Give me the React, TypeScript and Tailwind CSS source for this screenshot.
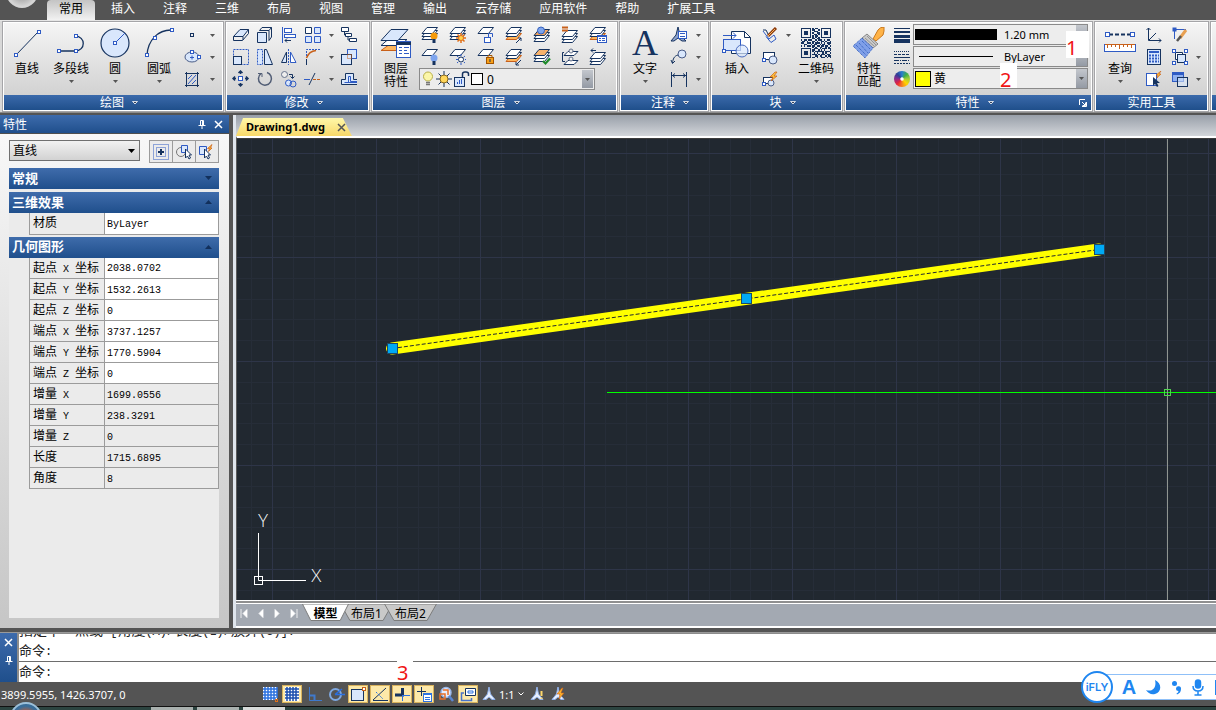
import { useState, type ReactNode } from 'react'
import clsx from 'clsx'

const NAVY = '#16335f'
const BLUE = '#2f5bc4'
const PALE = '#d9e7fc'
const ORANGE = '#c8601a'

const menus = ['常用', '插入', '注释', '三维', '布局', '视图', '管理', '输出', '云存储', '应用软件', '帮助', '扩展工具']

type Prop = { label: string; axis?: string; tail?: string; value: string; readOnly?: boolean }

const geometry: Prop[] = [
  { label: '起点', axis: 'X', tail: '坐标', value: '2038.0702' },
  { label: '起点', axis: 'Y', tail: '坐标', value: '1532.2613' },
  { label: '起点', axis: 'Z', tail: '坐标', value: '0' },
  { label: '端点', axis: 'X', tail: '坐标', value: '3737.1257' },
  { label: '端点', axis: 'Y', tail: '坐标', value: '1770.5904' },
  { label: '端点', axis: 'Z', tail: '坐标', value: '0' },
  { label: '增量', axis: 'X', value: '1699.0556', readOnly: true },
  { label: '增量', axis: 'Y', value: '238.3291', readOnly: true },
  { label: '增量', axis: 'Z', value: '0', readOnly: true },
  { label: '长度', value: '1715.6895', readOnly: true },
  { label: '角度', value: '8', readOnly: true },
]

function Svg({ w = 18, h = w, children }: { w?: number; h?: number; children: ReactNode }) {
  return (
    <svg width={w} height={h} viewBox={`0 0 ${w} ${h}`} fill="none" stroke={NAVY} className="block shrink-0" aria-hidden="true">
      {children}
    </svg>
  )
}

// small square grip used all over the drawing icons
function Grip({ x, y }: { x: number; y: number }) {
  return <rect x={x - 1.5} y={y - 1.5} width="3" height="3" fill="#fff" stroke={BLUE} />
}

function Tri({ className }: { className?: string }) {
  return (
    <svg width="5" height="3" viewBox="0 0 5 3" className={clsx('block', className)} aria-hidden="true">
      <path d="M0 0H5L2.5 3Z" fill="#555" />
    </svg>
  )
}

function Chevron() {
  return (
    <svg width="6" height="4" viewBox="0 0 6 4" aria-hidden="true">
      <path d="M0.5 0.5H5.5L3 3Z" fill="#33415c" stroke="#fff" strokeWidth="0.8" />
    </svg>
  )
}

function Panel({ title, label, launcher, noArrow, className, children }: {
  title: string
  label?: string
  launcher?: boolean
  noArrow?: boolean
  className: string
  children?: ReactNode
}) {
  const arrow = title && !noArrow
  return (
    <section
      aria-label={label ?? title}
      className={clsx('flex shrink-0 flex-col border border-[#a5a5a8] bg-white p-px', className)}
    >
      <div className="flex h-[72px] bg-linear-to-b from-[#f5f5f5] to-[#d2d2d2]">{children}</div>
      <button
        className={clsx(
          'relative flex h-[15px] w-full items-center justify-center gap-2 bg-linear-to-b from-[#3b6aab] to-[#1f4f8b] text-white',
          arrow && 'pl-3',
        )}
      >
        {title}
        {arrow && <Chevron />}
        {launcher && (
          <svg width="8" height="8" viewBox="0 0 8 8" className="absolute right-1" aria-hidden="true">
            <path d="M0.5 6V0.5H6M7.5 3V7.5H3M3 3L6 6M6.5 3.5V6.5H3.5" stroke="#fff" fill="none" />
          </svg>
        )}
      </button>
    </section>
  )
}

function Big({ icon, lines, arrow, className }: { icon: ReactNode; lines: string[]; arrow?: boolean; className: string }) {
  return (
    <button className={clsx('flex shrink-0 flex-col items-center pt-1', className)}>
      {icon}
      <span className="mt-[3px] leading-[13px] whitespace-nowrap">
        {lines.map((l) => (
          <span key={l} className="block">{l}</span>
        ))}
      </span>
      {arrow && <Tri className="mt-[5px]" />}
    </button>
  )
}

function Col({ items, className }: { items: ReactNode[]; className: string }) {
  return (
    <div className={clsx('flex shrink-0 flex-col pt-px', className)}>
      {items.map((it, i) => (
        <div key={i} className="flex h-[22px] items-center justify-center">
          {it && <button>{it}</button>}
        </div>
      ))}
    </div>
  )
}

// stack of layer sheets, drawn from the lowest up
function Sheets({ y = 1, n = 3, top = '#fff', bottom = '#fff' }: { y?: number; n?: number; top?: string; bottom?: string }) {
  return (
    <>
      {Array.from({ length: n }, (_, i) => n - 1 - i).map((i) => (
        <path
          key={i}
          d={`M6 ${y + i * 3 + 0.5}H16.5L11.5 ${y + i * 3 + 6.5}H1Z`}
          fill={i === 0 ? top : i === n - 1 ? bottom : '#fff'}
          stroke={i === n - 1 && bottom !== '#fff' ? ORANGE : NAVY}
        />
      ))}
    </>
  )
}

const Bulb = ({ c }: { c: string }) => (
  <g stroke="none">
    <circle cx="13" cy="10" r="3.5" fill={c} />
    <rect x="11.5" y="13" width="3" height="4" fill={NAVY} />
  </g>
)

const layerTop = [
  <Svg><Sheets /><Bulb c="#f59a0b" /></Svg>,
  <Svg>
    <Sheets />
    <path d="M12 7V17M7 12H17M8.5 8.5L15.5 15.5M15.5 8.5L8.5 15.5" stroke="#e0701a" strokeWidth="1.5" />
    <circle cx="12" cy="12" r="2.5" fill="#ffd34d" stroke="#e0701a" />
  </Svg>,
  <Svg><Sheets n={1} /><rect x="7.5" y="11.5" width="6" height="5" fill="#fff" stroke={BLUE} /><path d="M11.5 11V7.5H15.5V11" stroke={BLUE} /></Svg>,
  <Svg><Sheets bottom="#ffb65c" /><path d="M11 17L16 12M13 12H16V15" /></Svg>,
  <Svg><Sheets y={3} top="#f3a45d" /><circle cx="8" cy="4.5" r="3.5" fill="#7ea5ee" stroke="#3460bd" /></Svg>,
  <Svg><Sheets y={4} /><path d="M1 1.5H7M1 4.5H7" stroke={ORANGE} strokeWidth="2" /></Svg>,
  <Svg><Sheets bottom="#ffb65c" /><rect x="8.5" y="9.5" width="9" height="7" fill="#fff" stroke={BLUE} /><path d="M8 10.5H18M10 12.5H12M13 12.5H16M10 14.5H12M13 14.5H16" stroke={BLUE} /></Svg>,
]

const layerBottom = [
  <Svg><Sheets n={1} /><Bulb c="#7ea5ee" /></Svg>,
  <Svg>
    <Sheets n={1} />
    <path d="M12 6V17M7 11.5H17M8 8L16 15M16 8L8 15" stroke={BLUE} strokeDasharray="2 1" />
    <circle cx="12" cy="11.5" r="2.5" fill="#fff" stroke={NAVY} />
  </Svg>,
  <Svg><Sheets n={1} /><path d="M11 10V7.5H15V10" stroke="#a35400" /><rect x="9.5" y="9.5" width="7" height="6" fill="#f6a01a" stroke="#a35400" /><path d="M13 11V14" /></Svg>,
  <Svg><Sheets bottom="#ffb65c" /><path d="M16 12L11 17M11 14V17H14" /></Svg>,
  <Svg><Sheets top="#f8b26b" /><path d="M10 13L12.5 15.5L17 10.5" stroke="#1f8a2a" strokeWidth="2.2" /></Svg>,
  <Svg>
    <path d="M7 3.5H17L13 7.5H3Z" fill="#fff" />
    <path d="M7 12.5H17L13 16.5H3Z" fill="#fff" />
    <circle cx="10" cy="3" r="2" fill="#eee" stroke="#66738d" />
    <circle cx="10" cy="11" r="2" fill="#eee" stroke="#66738d" />
    <path d="M3 4.5H1.5V13.5H4" />
  </Svg>,
  <Svg><Sheets y={4} /><path d="M2 2.5H7M4 0.5L2 2.5L4 4.5" /></Svg>,
]

// 修改 panel, column by column
const modify: ReactNode[][] = [
  [
    <Svg><path d="M1.5 10.5L8 3.5H16.5L11 10.5Z" fill={PALE} /><path d="M1.5 10.5V14.5H10.5L16.5 7.5V3.5M11 10.5V14" /></Svg>,
    <Svg><rect x="1.5" y="1.5" width="15" height="15" stroke={BLUE} strokeDasharray="2 1" /><rect x="1.5" y="8.5" width="8" height="8" fill={PALE} /></Svg>,
    <Svg>
      <rect x="6.5" y="6.5" width="4" height="4" fill="#fff" stroke={BLUE} />
      <path d="M8.5 4V1M6.5 3L8.5 1L10.5 3M8.5 13V16M6.5 14L8.5 16L10.5 14M4 8.5H1M3 6.5L1 8.5L3 10.5M13 8.5H16M14 6.5L16 8.5L14 10.5" strokeWidth="1.5" />
    </Svg>,
  ],
  [
    <Svg><path d="M1.5 6.5H10.5V16.5H1.5Z" fill={PALE} /><path d="M3.5 4.5L6 1.5H15.5L13 4.5M3.5 4.5H13V14.5L15.5 11V1.5" /></Svg>,
    <Svg><path d="M1.5 1.5H6.5V16.5H1.5Z" fill={PALE} stroke={BLUE} strokeDasharray="2 1" /><path d="M8.5 1.5H10.5L16.5 16.5H8.5Z" fill={PALE} /></Svg>,
    <Svg><path d="M5 3.5A6.5 6.5 0 1 0 11 2.5" stroke="#515d75" strokeWidth="1.5" /><path d="M2 3.5H6V7" stroke="#515d75" /></Svg>,
  ],
  [
    <Svg><path d="M2.5 1V17" stroke={BLUE} /><rect x="4.5" y="2.5" width="7" height="4" fill="#fff" stroke={BLUE} /><rect x="4.5" y="8.5" width="11" height="3" fill="#fff" stroke={BLUE} /><path d="M11 14.5H5M7 12.5L5 14.5L7 16.5" /></Svg>,
    <Svg><path d="M8.5 1V17" stroke={BLUE} strokeDasharray="2 1" /><path d="M6.5 4V14.5H1.5Z" fill={PALE} /><path d="M10.5 4V14.5H16Z" fill="#fff" stroke={BLUE} /></Svg>,
    <Svg><circle cx="4.5" cy="4.5" r="3" fill="#eee" stroke="#66738d" /><circle cx="8.5" cy="13" r="3" fill={PALE} stroke={BLUE} /><circle cx="13" cy="14" r="3" stroke={BLUE} /><path d="M9 4.5H12.5V8M10.5 6.5L12.5 8.5L14.5 6.5" /></Svg>,
  ],
  [
    <Svg><path d="M1.5 1.5H7.5V7.5H1.5Z" fill="#fff" /><path d="M10.5 1.5H16.5V7.5H10.5ZM1.5 10.5H7.5V16.5H1.5ZM10.5 10.5H16.5V16.5H10.5Z" fill={PALE} stroke={BLUE} /></Svg>,
    <Svg><path d="M2.5 17V11" /><path d="M2.5 10C4 6 7 3 12 2.5" stroke={ORANGE} strokeWidth="1.5" /><path d="M2.5 8V1.5H17" stroke={BLUE} strokeDasharray="2 1" /></Svg>,
    <Svg><path d="M0 9.5H6" stroke={BLUE} /><path d="M5 15L11 3" /><path d="M9 9.5H17" stroke={ORANGE} strokeDasharray="3 1" /></Svg>,
  ],
  [<Tri />, <Tri />, <Tri />],
  [
    <Svg><path d="M1.5 1.5H8.5V5.5H1.5ZM5.5 7.5H11.5V10.5H5.5ZM9.5 12.5H16.5V15.5H9.5Z" fill="#fff" /><path d="M4.5 5.5V9H6M8 11V14H10" /></Svg>,
    <Svg><rect x="7.5" y="1.5" width="9" height="9" fill={PALE} stroke={BLUE} /><rect x="1.5" y="6.5" width="10" height="10" fill={PALE} /><path d="M7.5 6.5H11.5V10.5H7.5Z" stroke={ORANGE} strokeDasharray="1 1" /></Svg>,
    <Svg><path d="M17 14.5H1.5V9.5H5.5V3.5H13.5V9.5H17" fill={PALE} /><path d="M17 12.5H4.5M8.5 12V6.5H10.5V11.5H17" stroke={BLUE} /></Svg>,
  ],
]

const QR = [
  '111111101011001111111', '100000101100101000001', '101110100111001011101', '101110101001101011101',
  '101110100110101011101', '100000101011001000001', '111111101010101111111', '000000001101100000000',
  '101101110010111010110', '011010001101001101001', '110011101011101010111', '001100010110010110010',
  '101011101101101101101', '000000001010011001010', '111111100111010111011', '100000101100101010001',
  '101110101011111101110', '101110100101000101001', '101110101110101110110', '100000100011011001011',
  '111111101101001110101',
]

function QrIcon() {
  return (
    <svg width="30" height="30" viewBox="0 0 21 21" fill={NAVY} className="block" shapeRendering="crispEdges" aria-hidden="true">
      {QR.map((row, y) =>
        row.split('').map((c, x) => (c === '1' ? <rect key={`${x}-${y}`} x={x} y={y} width="1" height="1" /> : null)),
      )}
    </svg>
  )
}

function DropArrow() {
  return (
    <span className="pointer-events-none flex w-[11px] shrink-0 items-center justify-center bg-linear-to-b from-[#c3c7cd] to-[#949aa4]">
      <Tri />
    </span>
  )
}

function Ribbon() {
  return (
    <div className="flex shrink-0 gap-px overflow-hidden border-t border-[#e6e6e6] bg-[#d8d8d8] pl-0.5">
      <Panel title="绘图" className="w-[222px]">
        <Big className="ml-px w-11" lines={['直线']} icon={<Svg w={30} h={32}><path d="M4 28L26 5" /><Grip x={4} y={28} /><Grip x={27} y={5} /></Svg>} />
        <Big className="w-11" arrow lines={['多段线']} icon={<Svg w={32}><path d="M3 24H20C31 24 31 9 20 9" strokeWidth="1.3" /><Grip x={4} y={24} /><Grip x={21} y={24} /><Grip x={21} y={9} /></Svg>} />
        <Big className="w-11" arrow lines={['圆']} icon={<Svg w={32}><circle cx="16" cy="16" r="14" fill={PALE} strokeWidth="1.2" /><path d="M16 16L26 6" stroke={BLUE} /><Grip x={16} y={16} /></Svg>} />
        <Big className="w-11" arrow lines={['圆弧']} icon={<Svg w={32}><path d="M4 28C5 13 15 3 28 3" strokeWidth="1.3" /><Grip x={4} y={28} /><Grip x={12} y={11} /><Grip x={29} y={3} /></Svg>} />
        <Col className="w-[22px]" items={[
          <Svg><rect x="7.5" y="7.5" width="3" height="3" /></Svg>,
          <Svg><ellipse cx="9" cy="9" rx="7" ry="5" fill={PALE} stroke="#4a5d88" /><path d="M7 9.5H11M9 7.5V11.5" stroke={BLUE} /><Grip x={9} y={4} /><Grip x={16} y={9} /></Svg>,
          <Svg><path d="M3.5 2V17M14.5 2V17M2 3.5H16M2 15.5H16" /><path d="M5 9L9 5M5 14L13 5M9 14L13 10" stroke={BLUE} /></Svg>,
        ]} />
        <Col className="w-[18px]" items={[<Tri />, <Tri />, <Tri />]} />
      </Panel>

      <Panel title="修改" className="w-[145px]">
        <div className="flex pl-0.5">
          {modify.map((items, i) => (
            <Col key={i} items={items} className={i === 4 ? 'w-3' : 'w-6'} />
          ))}
        </div>
      </Panel>

      <Panel title="图层" className="w-[247px]">
        <Big className="ml-[3px] w-10" lines={['图层', '特性']} icon={
          <Svg w={32}>
            <path d="M8 18.5H26L20 23.5H1Z" fill="#ffb65c" stroke={ORANGE} />
            <path d="M8 12.5H27L20 18.5H1Z" fill="#fff" />
            <path d="M11 2.5H28L18 13.5H1Z" fill={PALE} />
            <rect x="16.5" y="14.5" width="14" height="16" fill="#fff" stroke={BLUE} />
            <path d="M16 16.5H31" stroke={NAVY} strokeWidth="3" />
            <path d="M19 20.5H22M24 20.5H29M19 23.5H22M24 23.5H27M19 26.5H22M24 26.5H29" stroke={BLUE} />
          </Svg>
        } />
        <div className="pt-px">
          {[layerTop, layerBottom].map((row, r) => (
            <div key={r} className="flex">
              {row.map((icon, i) => (
                <button key={i} className="flex h-[22px] w-7 items-center justify-center">{icon}</button>
              ))}
            </div>
          ))}
          <div className="ml-[3px] flex h-[22px] w-[176px] border border-[#8a8a8a] bg-[#ececec] p-px">
            <div className="flex items-center gap-px">
              <Svg w={14} h={18}>
                <circle cx="7" cy="6.5" r="4.5" fill="#fbf6a8" stroke="#b9b04a" />
                <path d="M5 12.5H9M5 14.5H9" stroke="#777" strokeWidth="1.5" />
              </Svg>
              <Svg w={16} h={18}>
                <path d="M8 1V17M0 9H16M2.5 3.5L13.5 14.5M13.5 3.5L2.5 14.5" stroke={NAVY} />
                <circle cx="8" cy="9" r="4" fill="#ffd65a" stroke="#8a6a20" />
              </Svg>
              <Svg w={17} h={18}>
                <rect x="1.5" y="7.5" width="10" height="9" fill={PALE} stroke={NAVY} />
                <path d="M4.5 14V12M6.5 14V10M8.5 14V9" stroke={BLUE} />
                <path d="M9.5 7V4Q9.5 2 12 2H13Q15.5 2 15.5 4V6" strokeWidth="1.5" />
              </Svg>
              <span className="size-3 border border-black bg-white" />
            </div>
            <select aria-label="图层" className="min-w-0 flex-1 appearance-none pl-1 outline-none">
              <option>0</option>
            </select>
            <DropArrow />
          </div>
        </div>
      </Panel>

      <Panel title="注释" className="w-[90px]">
        <Big className="w-12" arrow lines={['文字']} icon={<span className="flex h-8 items-center font-['Liberation_Serif',serif] text-[36px] leading-8 text-[#16335f]">A</span>} />
        <Col className="w-5" items={[
          <Svg><path d="M8 1L10 9L16 15H12L8 12L4 15H1L6 9Z" fill="#8da2cc" /><rect x="8.5" y="5.5" width="8" height="7" fill="#fff" stroke={BLUE} /><path d="M10 7.5H15M10 10.5H15" stroke={BLUE} /></Svg>,
          <Svg><circle cx="12" cy="6" r="4" fill={PALE} stroke="#4a5d88" /><path d="M8 7C4 8 3 11 2.5 15M1 12L2.5 15.5L5 13" /></Svg>,
          <Svg><path d="M1.5 2V17M16.5 2V17" /><path d="M2 5.5H16M5 3.5L2.5 5.5L5 7.5M13 3.5L15.5 5.5L13 7.5" stroke={NAVY} /></Svg>,
        ]} />
        <Col className="w-[18px]" items={[<Tri />, <Tri />, <Tri />]} />
      </Panel>

      <Panel title="块" className="w-[133px]">
        <Big className="w-[50px]" lines={['插入']} icon={
          <Svg w={30} h={32}>
            <path d="M9.5 4.5H22.5L28.5 10.5V26.5H9.5Z" fill="#fff" />
            <path d="M22.5 4.5V10.5H28.5" />
            <rect x="1.5" y="12.5" width="17" height="11" fill={PALE} stroke={BLUE} />
            <circle cx="20" cy="24" r="6" fill={PALE} fillOpacity="0.7" stroke="#4a6cc0" />
            <path d="M1 8.5H14M11 5.5L14 8.5L11 11.5" stroke={BLUE} />
            <Grip x={2} y={24} />
          </Svg>
        } />
        <Col className="w-4" items={[
          <Svg w={16}><path d="M1 4L7 12L12 8M4 9.5L9 15.5L14 12L12 8" stroke={BLUE} /><path d="M1 3H4L6 7" /><path d="M6 9L14 1" stroke="#8c3a0c" strokeWidth="3" /><path d="M6 9L13 2" stroke="#f5b25a" /></Svg>,
          <Svg w={16}><rect x="1.5" y="3.5" width="11" height="7" fill="#fff" /><circle cx="11" cy="11" r="4" fill={PALE} stroke="#4a5d88" /><Grip x={2} y={11} /></Svg>,
          <Svg w={16}><rect x="1.5" y="6.5" width="9" height="6" fill="#fff" /><circle cx="9" cy="12" r="3" fill={PALE} stroke="#4a5d88" /><path d="M13 1L8 6H11L9 10L15 5H12L15 1Z" fill="#ffc13a" stroke={ORANGE} strokeWidth="0.7" /><Grip x={2} y={13} /></Svg>,
        ]} />
        <Col className="w-5" items={[<Tri />, null, null]} />
        <Big className="w-9" arrow lines={['二维码']} icon={<span className="flex h-8 items-center"><QrIcon /></span>} />
      </Panel>

      <Panel title="特性" launcher className="w-[249px]">
        <Big className="w-[46px]" lines={['特性', '匹配']} icon={
          <Svg w={32}>
            <path d="M20 12L25 3Q27 0 31 0V4L30 8L23 14Z" fill="#ffb347" stroke="#c9781d" />
            <path d="M14 7L25 17L20 21L9 11Z" fill="#c9c9c9" stroke="#888" />
            <path d="M12 11L21 19M14 9L23 18" stroke="#888" strokeWidth="0.8" />
            <path d="M9 11L20 21L12 31L0 19Z" fill="#7f9fe8" stroke="#2a57b8" strokeDasharray="1 1" />
            <path d="M6 16L15 26M3 18L13 28M9 14L17 22" stroke="#2a57b8" strokeDasharray="1 1" />
          </Svg>
        } />
        <Col className="w-5" items={[
          <Svg w={16}><path d="M0 1.5H16" /><path d="M0 5H16" strokeWidth="2" /><path d="M0 9.5H16" strokeWidth="3" /><path d="M0 14H16" strokeWidth="4" /></Svg>,
          <Svg w={16}><path d="M0 2.5H16" strokeDasharray="1 1" /><path d="M0 5.5H16" strokeDasharray="3 1" /><path d="M0 8.5H16" /><path d="M0 11.5H16" strokeDasharray="5 1 1 1" /><path d="M0 14.5H16" strokeDasharray="2 1" /></Svg>,
          <span className="block size-4 rounded-full bg-[radial-gradient(#ffffff_10%,transparent_20%),conic-gradient(#2b7fd0,#3fae49,#a8cf38,#ffd400,#f58220,#e5243b,#8f2a8c,#2b3f96,#2b7fd0)]" />,
        ]} />
        <div className="relative mt-px mr-[3px] ml-px flex min-w-0 flex-1 flex-col gap-px">
          {[
            { name: '线宽', value: '1.20 mm', mark: <span className="h-[11px] w-[82px] bg-black" /> },
            { name: '线型', value: 'ByLayer', mark: <span className="mx-1 h-px w-[74px] bg-black" /> },
            { name: '颜色', value: '黄', mark: <span className="size-4 border border-black bg-[#ffff00]" /> },
          ].map((f, i) => (
            <div key={f.name} className="flex h-[21px] border border-[#8a8a8a] bg-[#ededed]">
              <div className="flex items-center pl-px">{f.mark}</div>
              <select
                aria-label={f.name}
                className={clsx('min-w-0 flex-1 appearance-none outline-none', i === 2 ? 'pl-[3px]' : 'pl-[7px] text-[11px]')}
              >
                <option>{f.value}</option>
              </select>
              <DropArrow />
            </div>
          ))}
          <span className="absolute top-[7px] -right-px flex h-[27px] w-[23px] items-center bg-white pt-1.5 text-[20px] text-[#f01414]">1</span>
          <span className="absolute top-[39px] left-[87px] flex h-[25px] w-[17px] items-center bg-white pt-2 text-[20px] text-[#f01414]">2</span>
        </div>
      </Panel>

      <Panel title="实用工具" noArrow className="w-[115px]">
        <Big className="w-12" arrow lines={['查询']} icon={
          <Svg w={34} h={32}>
            <path d="M6 7.5H28" strokeWidth="2" strokeDasharray="4 2" />
            <rect x="2.5" y="5.5" width="4" height="4" fill="#fff" stroke={BLUE} />
            <rect x="27.5" y="5.5" width="4" height="4" fill="#fff" stroke={BLUE} />
            <rect x="1.5" y="17.5" width="31" height="7" fill="#fff" stroke={BLUE} />
            <path d="M2 17.5H32M4.5 18V21M8.5 18V20M12.5 18V20M16.5 18V22M20.5 18V20M24.5 18V20M28.5 18V21" stroke={ORANGE} />
          </Svg>
        } />
        <Col className="w-5" items={[
          <Svg w={16}><path d="M2.5 1V13.5H15M0.5 3L2.5 1L4.5 3M13 11.5L15 13.5L13 15.5M3 13L10 6" /></Svg>,
          <Svg w={16}><rect x="1.5" y="0.5" width="13" height="15" fill={PALE} /><path d="M3 3H13" stroke={BLUE} strokeWidth="2" /><path d="M3 6.5H13M3 9.5H13M3 12.5H13" stroke={BLUE} strokeWidth="2" strokeDasharray="2 1" /></Svg>,
          <Svg w={16}><rect x="0.5" y="2.5" width="10" height="12" fill="#fff" stroke={BLUE} /><path d="M7 6V15L9 13L11 16L12.5 15L11 12H14Z" fill={NAVY} stroke="none" /><path d="M15 0L10 4H12L11 7L15 3H13Z" fill="#ffb52e" stroke={ORANGE} strokeWidth="0.6" /></Svg>,
        ]} />
        <Col className="w-8" items={[
          <Svg w={16}><path d="M2 2.5H14M2.5 2V12" stroke={BLUE} /><rect x="1" y="1" width="3" height="3" fill={BLUE} stroke={BLUE} /><path d="M14 3L8 11" stroke="#e8a052" strokeWidth="3" /><path d="M9 9L5 14" stroke="#555" strokeWidth="2.5" /></Svg>,
          <Svg w={16}><path d="M3.5 3.5H10.5V10.5H3.5Z" fill="#fff" /><rect x="5.5" y="5.5" width="8" height="8" fill={PALE} stroke={NAVY} /><Grip x={2} y={2} /><Grip x={14} y={2} /><Grip x={2} y={14} /><Grip x={14} y={14} /></Svg>,
          <Svg w={16}><rect x="0.5" y="1.5" width="11" height="9" fill="#8fb0f0" stroke={BLUE} /><path d="M1 3H11" stroke={BLUE} strokeWidth="2" /><rect x="5.5" y="6.5" width="10" height="9" fill={PALE} fillOpacity="0.6" /></Svg>,
        ]} />
        <Col className="w-1" items={[null, <Tri />, <Tri />]} />
      </Panel>

      <Panel title="" label="剪贴板" className="w-[60px]" />
    </div>
  )
}

function Pin() {
  return (
    <svg width="8" height="9" viewBox="0 0 8 9" fill="none" stroke="#fff" aria-hidden="true">
      <path d="M2.5 5V0.5H5.5V5M0.5 5.5H7.5M4.5 0.5V5M4 6V9" />
    </svg>
  )
}

function Close({ stroke = '#fff' }: { stroke?: string }) {
  return (
    <svg width="9" height="9" viewBox="0 0 9 9" fill="none" stroke={stroke} strokeWidth="1.5" aria-hidden="true">
      <path d="M1 1L8 8M8 1L1 8" />
    </svg>
  )
}

function SectionHead({ title, open, onToggle }: { title: string; open: boolean; onToggle: () => void }) {
  return (
    <button
      onClick={onToggle}
      className="flex h-[21px] w-full items-center justify-between bg-linear-to-b from-[#3f6cab] to-[#1f4f8c] pr-[7px] pb-px pl-[3px] text-[13px] font-bold text-white"
    >
      {title}
      <svg width="7" height="4" viewBox="0 0 7 4" aria-hidden="true">
        <path d={open ? 'M0 4H7L3.5 0Z' : 'M0 0H7L3.5 4Z'} fill="#12305c" />
      </svg>
    </button>
  )
}

function PropTable({ rows }: { rows: Prop[] }) {
  return (
    <table className="-mb-px ml-5 w-[190px] table-fixed border-collapse">
      <tbody>
        {rows.map((p) => {
          const id = `${p.label}${p.axis ?? ''}`
          return (
            <tr key={id} className="h-[21px]">
              <th scope="row" className="w-[75px] border border-t-0 border-[#9b9b9b] bg-[#ebebeb] p-0 pl-[3px] text-left font-normal">
                <label htmlFor={id} className="block h-5 leading-[19px] whitespace-nowrap">
                  {p.label}
                  {p.axis && <span className="px-1.5 font-['Liberation_Mono',monospace] text-[10px]">{p.axis}</span>}
                  {p.tail}
                </label>
              </th>
              <td className={clsx('border border-t-0 border-[#9b9b9b] p-0', p.readOnly ? 'bg-[#ebebeb]' : 'bg-white')}>
                <input
                  id={id}
                  defaultValue={p.value}
                  readOnly={p.readOnly}
                  className="block h-5 w-full bg-transparent pt-0.5 pl-0.5 font-['Liberation_Mono',monospace] text-[10px] outline-none"
                />
              </td>
            </tr>
          )
        })}
      </tbody>
    </table>
  )
}

function Palette() {
  const [open, setOpen] = useState({ general: false, effect: true, geometry: true })
  return (
    <aside className="mb-1 flex w-[229px] shrink-0 flex-col">
      <header className="flex h-[18px] items-center bg-linear-to-b from-[#3d6bac] to-[#1f4f8c] pr-1.5 pl-[3px] text-white">
        <h2 className="flex-1">特性</h2>
        <div className="flex gap-2">
          <button aria-label="固定"><Pin /></button>
          <button aria-label="关闭"><Close /></button>
        </div>
      </header>
      <div className="flex flex-1 flex-col border-t border-[#4f4f4f] bg-linear-to-b from-[#f8f8f8] to-[#c6c6c6] pr-2.5 pb-2.5 pl-[9px]">
        <div className="flex justify-between pt-1.5 pb-[5px]">
          <div className="relative h-[21px] w-[131px]">
            <select aria-label="对象" className="size-full appearance-none border border-[#707070] bg-linear-to-b from-[#f2f2f2] to-[#d2d2d2] pl-[3px] outline-none">
              <option>直线</option>
            </select>
            <svg width="7" height="4" viewBox="0 0 7 4" className="pointer-events-none absolute top-[9px] right-[5px]" aria-hidden="true">
              <path d="M0 0H7L3.5 4Z" />
            </svg>
          </div>
          <div className="flex h-[23px] divide-x divide-[#9b9b9b] border border-[#9b9b9b] bg-[#ebebeb]">
            <button aria-label="切换" className="px-[3px]">
              <Svg w={16}><path d="M0.5 0.5H15.5V15.5H0.5ZM3.5 3.5H12.5V12.5H3.5Z" stroke={BLUE} strokeDasharray="1 1" /><path d="M8 5V11M5 8H11" strokeWidth="2" /></Svg>
            </button>
            <button aria-label="选择对象" className="px-[3px]">
              <Svg w={16}><circle cx="5" cy="8" r="4.5" stroke="#777" /><path d="M5.5 1.5H11.5V8.5H5.5Z" fill={PALE} stroke={BLUE} /><path d="M9.5 5V14L11.5 12L13 15L14.5 14L13 11H15.5Z" fill="#fff" /></Svg>
            </button>
            <button aria-label="快速选择" className="px-[3px]">
              <Svg w={16}><path d="M0.5 2.5H7.5V10.5H0.5Z" fill={PALE} stroke={BLUE} /><path d="M5.5 5V14L7.5 12L9 15L10.5 14L9 11H11.5Z" fill="#fff" /><path d="M13 0.5L8.5 4.5H10.5L9.5 7.5L13 4H11.5Z" fill="#ffb52e" stroke={ORANGE} strokeWidth="0.7" /></Svg>
            </button>
          </div>
        </div>
        <div className="flex flex-1 flex-col gap-[3px] bg-[#ebebeb]">
          <SectionHead title="常规" open={open.general} onToggle={() => setOpen({ ...open, general: !open.general })} />
          <div>
            <SectionHead title="三维效果" open={open.effect} onToggle={() => setOpen({ ...open, effect: !open.effect })} />
            {open.effect && <PropTable rows={[{ label: '材质', value: 'ByLayer' }]} />}
          </div>
          <div>
            <SectionHead title="几何图形" open={open.geometry} onToggle={() => setOpen({ ...open, geometry: !open.geometry })} />
            {open.geometry && <PropTable rows={geometry} />}
          </div>
        </div>
      </div>
    </aside>
  )
}

function Drawing() {
  const grips = [[155, 209], [509, 159], [862, 110]]
  return (
    <div className="relative min-h-0 flex-1 border-t border-[#3c3c3c] bg-[#212830]">
      <svg className="absolute inset-0 size-full" role="img" aria-label="Drawing1.dwg">
        <defs>
          <pattern id="grid" x="35" y="14" width="104" height="104" patternUnits="userSpaceOnUse">
            <path d="M21.5 0V104M42.5 0V104M62.5 0V104M83.5 0V104M0 21.5H104M0 42.5H104M0 62.5H104M0 83.5H104" stroke="#262d38" />
            <path d="M0.5 0V104M0 0.5H104" stroke="#2e3548" />
          </pattern>
        </defs>
        <rect width="100%" height="100%" fill="url(#grid)" />
        <path d="M155 209.5L862 110.5" stroke="#ffff00" strokeWidth="12" strokeLinecap="round" />
        <path d="M155 209.5L862 110.5" stroke="#212830" strokeDasharray="4 2" />
        {grips.map(([x, y]) => (
          <rect key={x} x={x - 4.5} y={y - 4.5} width="10" height="10" fill="#00a9f4" stroke="#1d4a66" />
        ))}
        <line x1="370" x2="100%" y1="253.5" y2="253.5" stroke="#00ff00" />
        <line x1="930.5" x2="930.5" y1="0" y2="100%" stroke="#8f9590" />
        <rect x="927.5" y="250.5" width="6" height="6" fill="none" stroke="#4fd44f" />
      </svg>
      <svg width="80" height="90" viewBox="0 0 80 90" className="absolute bottom-0 left-4" fill="none" stroke="#fff" aria-hidden="true">
        <path d="M5.5 23V70.5H53" />
        <rect x="1.5" y="66.5" width="8" height="8" />
        <text x="5" y="17" fontFamily="Lato, sans-serif" fontSize="17" fontWeight="300" fill="#fff" stroke="none">Y</text>
        <text x="58" y="72" fontFamily="Lato, sans-serif" fontSize="17" fontWeight="300" fill="#fff" stroke="none">X</text>
      </svg>
    </div>
  )
}

function LayoutTab({ name, active, className }: { name: string; active?: boolean; className: string }) {
  return (
    <button className={clsx('relative -mr-[9px] h-[18px]', className, active && 'z-10 font-bold')}>
      <svg viewBox="0 0 48 18" preserveAspectRatio="none" className="absolute inset-0 size-full" aria-hidden="true">
        <path d="M0.5 0H47.5L39 16.5H9Z" fill={active ? '#fff' : '#c9c9c9'} stroke="#7c7c7c" vectorEffect="non-scaling-stroke" />
      </svg>
      <span className="relative block leading-[17px] whitespace-nowrap">{name}</span>
    </button>
  )
}

function Viewport() {
  const arrows = ['M1 0V9M7 0.5V8.5L3 4.5Z', 'M6 0.5V8.5L2 4.5Z', 'M2 0.5V8.5L6 4.5Z', 'M7 0V9M1 0.5V8.5L5 4.5Z']
  return (
    <main className="mb-1 ml-1 flex min-w-0 flex-1 flex-col border-l-3 border-[#dfe5ec] bg-white">
      <div className="flex h-[21px] shrink-0 items-end bg-linear-to-b from-[#989fa9] to-[#d3d6da]">
        <div className="flex h-[18px] items-center gap-3 bg-linear-to-b from-[#fff8a8] to-[#f8d868] pr-1.5 pl-2.5 text-[11px] font-bold [clip-path:polygon(7px_0,calc(100%-9px)_0,100%_100%,0_100%)]">
          <span className="pb-0.5">Drawing1.dwg</span>
          <button aria-label="关闭图纸"><Close stroke="#555" /></button>
        </div>
      </div>
      <div className="flex min-h-0 flex-1 border-t-2 border-l border-t-white border-l-[#5a5a5a]">
        <Drawing />
      </div>
      <div className="h-1 shrink-0 border-y border-y-white bg-[#8f8f8f]" />
      <div className="flex h-6 shrink-0 items-start border-b-2 border-white bg-[#a3a9b2]">
        <div className="flex h-[18px] w-[66px] items-center justify-around">
          {arrows.map((d) => (
            <button key={d}>
              <svg width="8" height="9" viewBox="0 0 8 9" fill="#fff" stroke="#fff" strokeWidth="0.8" className="block" aria-hidden="true"><path d={d} /></svg>
            </button>
          ))}
        </div>
        <LayoutTab name="模型" active className="w-[47px]" />
        <LayoutTab name="布局1" className="w-[53px]" />
        <LayoutTab name="布局2" className="w-[53px]" />
      </div>
    </main>
  )
}

function Mono({ children }: { children: ReactNode }) {
  return <span className="font-['Liberation_Mono',monospace] text-[12px]">{children}</span>
}

function CommandLine() {
  return (
    <div className="flex h-[50px] shrink-0 overflow-hidden border-t border-[#9a9a9a] bg-white text-[#222]">
      <div className="flex w-[17px] shrink-0 flex-col items-center gap-[9px] bg-linear-to-b from-[#3d6bac] to-[#1f4f8c] pt-[5px]">
        <button aria-label="关闭命令行" className="flex"><Close /></button>
        <button aria-label="固定命令行" className="flex"><Pin /></button>
      </div>
      <div className="flex min-w-0 flex-1 flex-col border-l-2 border-[#8c8c8c] text-[13px]">
        <div className="flex h-7 flex-col justify-end overflow-hidden border-t border-[#8c8c8c] leading-[18px] whitespace-pre">
          <p className="text-[14px]">指定下一点或<Mono> [</Mono>角度<Mono>(A)/</Mono>长度<Mono>(L)/</Mono>放弃<Mono>(U)]:</Mono></p>
          <p>命令<Mono>:</Mono></p>
        </div>
        <div className="relative flex flex-1 border-t border-[#6d6d6d]">
          <label htmlFor="command" className="leading-[18px]">命令<Mono>:</Mono></label>
          <input id="command" className="min-w-0 flex-1 pl-1 outline-none" />
          <span className="absolute -top-px left-[378px] h-5 w-4 bg-white text-[20px] leading-[23px] text-[#f01414]">3</span>
        </div>
      </div>
    </div>
  )
}

const Person = () => <path d="M8 1L9.5 8L14 13.5H11L8 11L5 13.5H2L6.5 8Z" fill="#e8f0ff" stroke="#8fb0ea" />

const toggles: { on?: boolean; name: string; icon: ReactNode }[] = [
  { name: '捕捉', icon: <><rect x="1" y="1" width="14" height="13" fill="#fff" stroke="none" /><path d="M3 1V14M6 1V14M9 1V14M12 1V14M15 1V12M1 3H15M1 6H15M1 9H15M1 12H14" stroke="#2c72e0" strokeWidth="1.5" /><rect x="13.5" y="13.5" width="2" height="2" stroke="#e0701a" /></> },
  { name: '栅格', on: true, icon: <><rect x="1" y="1" width="14" height="14" fill="#fff" stroke="none" /><path d="M3 1V15M6 1V15M9 1V15M12 1V15M1 3H15M1 6H15M1 9H15M1 12H15" stroke="#1c4fae" strokeWidth="1.5" /></> },
  { name: '正交', icon: <><path d="M3.5 1V14.5H16" stroke="#3f79cc" /><path d="M3.5 9.5H8.5V14" stroke="#3f79cc" strokeWidth="2" /></> },
  { name: '极轴', icon: <><circle cx="7.5" cy="8.5" r="5.5" stroke="#7fa8e0" strokeWidth="2" /><path d="M7 8.5H17M7 8.5L14 3" stroke="#2a6fe0" strokeWidth="1.5" /></> },
  { name: '对象捕捉', on: true, icon: <><rect x="1.5" y="3.5" width="12" height="11" fill={PALE} /><rect x="12.5" y="1.5" width="3" height="3" fill="#fff" stroke={ORANGE} /></> },
  { name: '对象追踪', on: true, icon: <><path d="M1 14.5H16M1 14L14 2" stroke={NAVY} /><path d="M4 6L11 13" stroke="#2c72e0" strokeDasharray="2 1" /></> },
  { name: '线宽', on: true, icon: <><path d="M8.5 2V9M1 9H10" strokeWidth="3" /><path d="M8.5 9V15M9 9.5H16" stroke="#2c72e0" /></> },
  { name: '动态输入', on: true, icon: <><path d="M5.5 1V10M1 5.5H10" /><rect x="7.5" y="7.5" width="8" height="8" fill="#fff" stroke="#2c72e0" /><path d="M8 8.5H15M9 11.5H14M9 13.5H14" stroke="#2c72e0" /></> },
  { name: '循环选择', icon: <><circle cx="8" cy="6.5" r="5" fill="#e8f0ff" stroke="#9bb8ea" strokeWidth="1.5" /><path d="M11 10L15 15" stroke="#5b86d0" strokeWidth="2.5" /><path d="M5 4H10V9M2 8H7V13H2Z" stroke="#e8702a" strokeWidth="1.5" /></> },
  { name: '模型空间', on: true, icon: <><path d="M5.5 2.5H15.5V9.5H5.5Z" fill="#fff" /><path d="M8 5H13V7H8Z" stroke="#2c72e0" /><path d="M4 7H1.5V14.5H11.5V12" stroke="#4a73c9" strokeWidth="1.5" /></> },
]

function StatusBar() {
  return (
    <footer className="flex h-6 shrink-0 items-center bg-[#545454] text-[11px] text-white">
      <span className="w-[260px] shrink-0 pl-px">3899.5955, 1426.3707, 0</span>
      <div className="flex gap-0.5">
        {toggles.map((t) => (
          <button
            key={t.name}
            aria-label={t.name}
            aria-pressed={!!t.on}
            className={clsx('flex h-[18px] w-5 items-center justify-center border', t.on ? 'border-[#d8b25c] bg-[#fde9a9]' : 'border-transparent')}
          >
            <Svg w={17}>{t.icon}</Svg>
          </button>
        ))}
      </div>
      <button className="ml-[3px] flex items-center gap-px">
        <Svg w={17}><Person /></Svg>
        1:1
        <svg width="6" height="4" viewBox="0 0 6 4" fill="none" stroke="#fff" className="ml-0.5" aria-hidden="true"><path d="M0.5 0.5L3 3L5.5 0.5" /></svg>
      </button>
      <button aria-label="注释可见性" className="ml-[5px]"><Svg w={17}><Person /><path d="M12.5 5V10M12.5 11.5V13" stroke="#ffd86b" strokeWidth="2" /></Svg></button>
      <button aria-label="自动缩放" className="ml-1"><Svg w={17}><Person /><path d="M12 2L7 8H10L9 13L14 7H11L13 2Z" fill="#ffb52e" stroke={ORANGE} strokeWidth="0.6" /></Svg></button>
    </footer>
  )
}

function InputMethodBar() {
  return (
    <div className="absolute right-0 bottom-[7px] flex items-center text-[#1f86f0]">
      <span className="z-10 flex size-8 items-center justify-center rounded-full border-2 border-[#1f86f0] bg-white font-['Inter',sans-serif] text-[11px] font-semibold">iFLY</span>
      <div className="-ml-4 flex h-[26px] w-[119px] items-center border-y border-[#8fc0f8] bg-white pl-[23px]">
        <button className="w-[18px] text-center font-['Liberation_Sans',sans-serif] text-[20px] leading-6 font-bold">A</button>
        <button aria-label="半角" className="ml-2"><svg width="15" height="15" viewBox="0 0 15 15" fill="#1f86f0"><path d="M9 0C16 3 16 12 9 14C5 15 2 13 0 10C6 12 11 8 9 0Z" /></svg></button>
        <button aria-label="中文标点" className="ml-[11px]"><svg width="10" height="15" viewBox="0 0 10 15" fill="#1f86f0"><circle cx="2.5" cy="3.5" r="2.5" /><path d="M4 8.5A2.5 2.5 0 1 1 9 9Q9 13 5 14.5L4.5 13.5Q6.5 12.5 6.5 11Q4 11 4 8.5Z" /></svg></button>
        <button aria-label="语音" className="ml-2.5"><svg width="12" height="17" viewBox="0 0 12 17" fill="none" stroke="#1f86f0" strokeWidth="1.5"><rect x="3.5" y="1" width="5" height="8" rx="2.5" fill="#1f86f0" /><path d="M1 7Q1 12 6 12Q11 12 11 7M6 12V15.5M2.5 16H9.5" /></svg></button>
        <span className="ml-auto h-[15px] w-px bg-[#1f86f0]" />
      </div>
    </div>
  )
}

export default function App() {
  const [tab, setTab] = useState('常用')
  return (
    <div className="relative flex h-screen flex-col overflow-hidden bg-[#545454] font-['Noto_Sans','Noto_Sans_CJK_SC',sans-serif] text-xs leading-[15px] text-black">
      <nav className="relative flex h-5 shrink-0 pl-[45px]">
        <button aria-label="应用程序" className="absolute -top-6 left-1.5 size-8 rounded-full border-2 border-[#d5d5d5] bg-radial from-[#8a8a8a] to-[#f4f4f4]" />
        {menus.map((m) => (
          <button
            key={m}
            onClick={() => setTab(m)}
            className={clsx(
              'pb-[3px]',
              tab === m ? 'mx-0.5 rounded-t-sm bg-linear-to-b from-[#c4c4c4] to-[#f2f2f2] px-3 text-black' : 'px-3.5 text-white',
            )}
          >
            {m}
          </button>
        ))}
      </nav>
      <Ribbon />
      <div className="mb-0.5 h-px shrink-0 bg-[#8c8c8c]" />
      <div className="flex min-h-0 flex-1">
        <Palette />
        <Viewport />
      </div>
      <CommandLine />
      <StatusBar />
      <div className="relative flex h-1 shrink-0 gap-1 border-t border-[#111] bg-[#2c4440] pl-[151px]">
        <span className="absolute -top-[5px] left-2.5 size-8 rounded-full border-2 border-[#9cc0da] bg-[radial-gradient(#e05a20_20%,#3a6d98_60%)]" />
        <span className="w-[42px] bg-[#a9b0ae]" />
        <span className="w-[42px] bg-[#a9b0ae]" />
        <span className="w-[42px] bg-[#d6dad9]" />
      </div>
      <InputMethodBar />
    </div>
  )
}
